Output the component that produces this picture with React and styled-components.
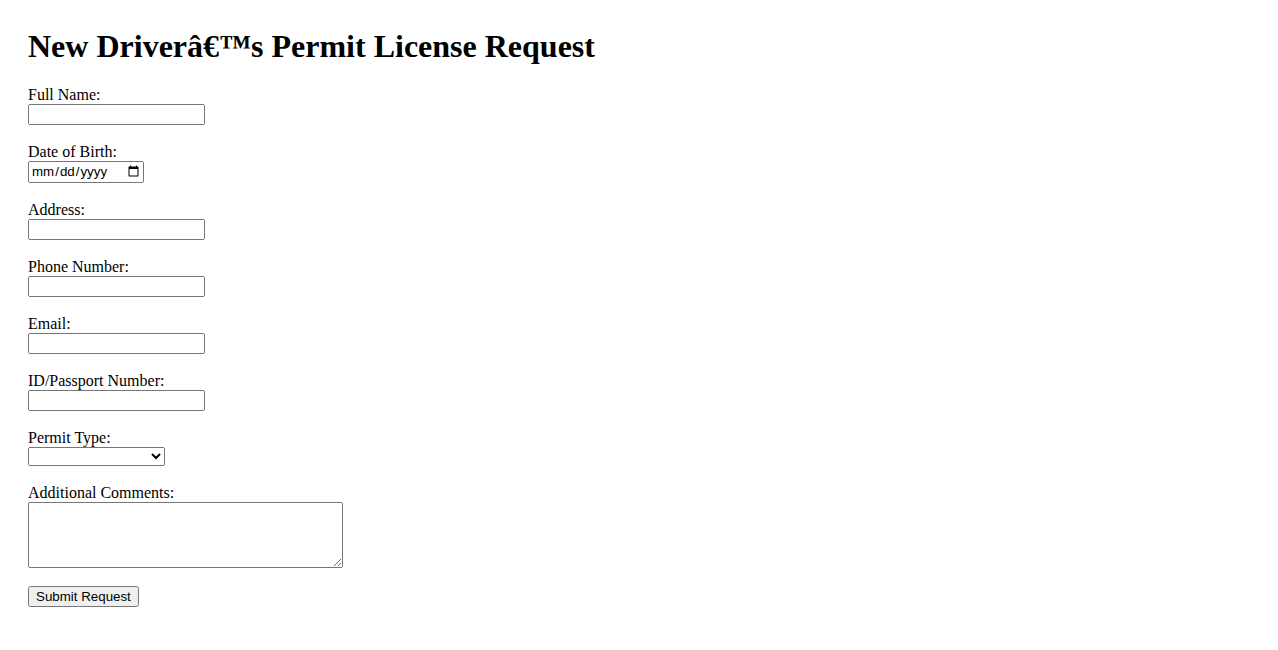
import React from "react";
import styled, { createGlobalStyle } from "styled-components";

const Global = createGlobalStyle`
  html, body { margin: 0; padding: 0; background: #fff; }
  body { font-family: "Liberation Serif", "Times New Roman", serif; font-size: 16px; color: #000; }
`;

const Page = styled.main`
  padding: 28px;
`;

const Title = styled.h1`
  margin: 0 0 22px;
  font-size: 32px;
  font-weight: bold;
  line-height: normal;
`;

const Form = styled.form`
  display: flex;
  flex-direction: column;
  align-items: flex-start;
  gap: 19px;
`;

const Field = styled.div`
  display: flex;
  flex-direction: column;
  align-items: flex-start;
`;

const Label = styled.label`
  display: block;
  font-size: 16px;
  line-height: 15px;
  padding-bottom: 2px;
`;

const controlFont = `
  font-family: "Liberation Sans", Arial, sans-serif;
  font-size: 13.333px;
  box-sizing: border-box;
  margin: 0;
`;

const TextInput = styled.input`
  ${controlFont}
  width: ${(p) => p.$w || 177}px;
  height: ${(p) => p.$h || 21}px;
`;

const Select = styled.select`
  ${controlFont}
  width: 137px;
  height: 19px;
`;

const TextArea = styled.textarea`
  ${controlFont}
  font-family: "Liberation Mono", monospace;
  width: 315px;
  height: 66px;
`;

const Actions = styled.div`
  margin-top: -1px;
`;

const Button = styled.button`
  ${controlFont}
  height: 21px;
  padding: 1px 6px;
`;

const fields = [
  { id: "name", label: "Full Name:", type: "text" },
  { id: "dob", label: "Date of Birth:", type: "date", w: 116, h: 22 },
  { id: "address", label: "Address:", type: "text" },
  { id: "phone", label: "Phone Number:", type: "tel" },
  { id: "email", label: "Email:", type: "email" },
  { id: "idnum", label: "ID/Passport Number:", type: "text" },
];

export default function App() {
  return (
    <>
      <Global />
      <Page>
        <Title>New Driverâ€™s Permit License Request</Title>
        <Form onSubmit={(e) => e.preventDefault()}>
          {fields.map((f) => (
            <Field key={f.id}>
              <Label htmlFor={f.id}>{f.label}</Label>
              <TextInput id={f.id} type={f.type} $w={f.w} $h={f.h} />
            </Field>
          ))}
          <Field>
            <Label htmlFor="permit">Permit Type:</Label>
            <Select id="permit" defaultValue="">
              <option value=""></option>
              <option value="learner">Learner</option>
              <option value="provisional">Provisional</option>
            </Select>
          </Field>
          <Field>
            <Label htmlFor="comments">Additional Comments:</Label>
            <TextArea id="comments" />
          </Field>
          <Actions>
            <Button type="submit">Submit Request</Button>
          </Actions>
        </Form>
      </Page>
    </>
  );
}
